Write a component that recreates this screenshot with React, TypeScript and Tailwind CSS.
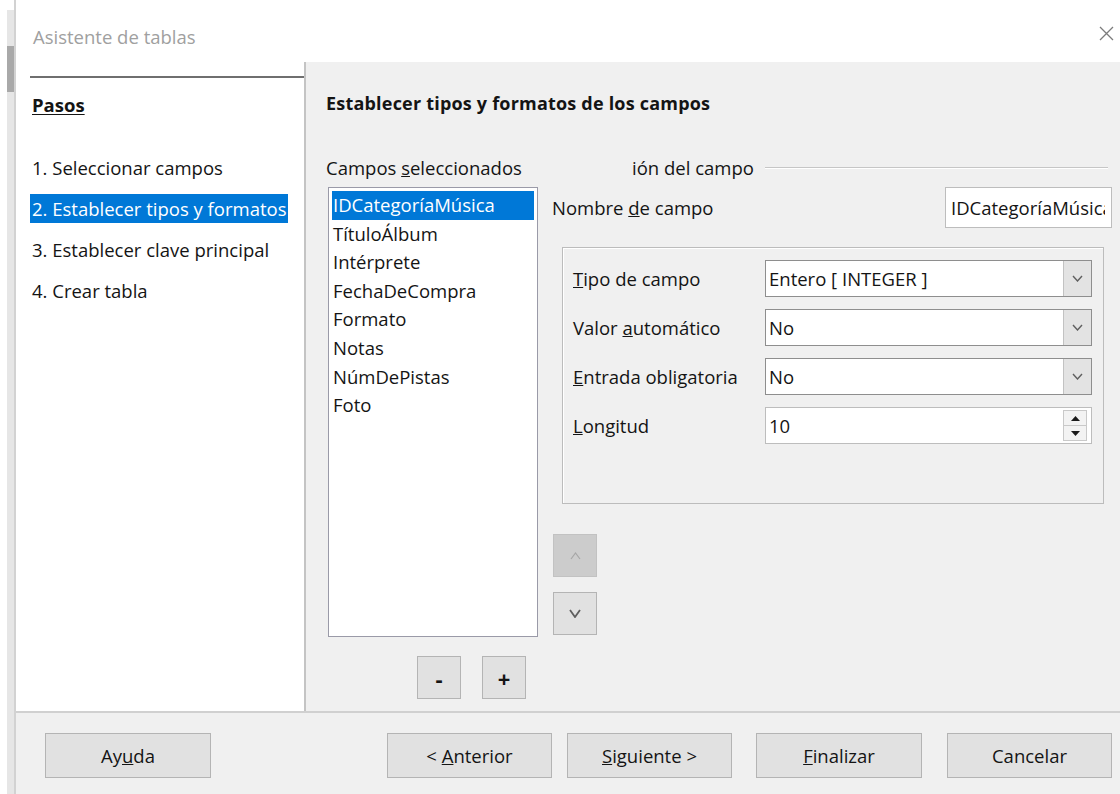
import type { ReactNode } from "react";

const fields = [
  "IDCategoríaMúsica",
  "TítuloÁlbum",
  "Intérprete",
  "FechaDeCompra",
  "Formato",
  "Notas",
  "NúmDePistas",
  "Foto",
];

const steps = [
  "1. Seleccionar campos",
  "2. Establecer tipos y formatos",
  "3. Establecer clave principal",
  "4. Crear tabla",
];

function Chevron({
  up = false,
  color = "#6b6b6b",
  w = 10,
  h = 6,
  sw = 1.3,
}: {
  up?: boolean;
  color?: string;
  w?: number;
  h?: number;
  sw?: number;
}) {
  const pts = up
    ? `1,${h - 1} ${w / 2},1 ${w - 1},${h - 1}`
    : `1,1 ${w / 2},${h - 1} ${w - 1},1`;
  return (
    <svg width={w} height={h} viewBox={`0 0 ${w} ${h}`}>
      <polyline points={pts} fill="none" stroke={color} strokeWidth={sw} />
    </svg>
  );
}

function Combo({ value }: { value: string }) {
  return (
    <div className="flex h-[37px] w-[327px] border border-[#8e8e8e] bg-white">
      <div className="flex flex-1 items-center pl-[3px] leading-[24px]">{value}</div>
      <div className="flex w-[28px] items-center justify-center border-l border-[#c2c2c2] bg-[#e3e3e3]">
        <Chevron color="#5f5f5f" w={11} h={7} sw={1.4} />
      </div>
    </div>
  );
}

function Spin({ value }: { value: string }) {
  return (
    <div className="flex h-[37px] w-[327px] border border-[#bdbdbd] bg-white">
      <div className="flex flex-1 items-center pl-[3px] leading-[24px]">{value}</div>
      <div className="my-[2px] mr-[4px] flex w-[24px] flex-col border border-[#c9c9c9] bg-[#f3f3f3]">
        <div className="flex flex-1 items-center justify-center border-b border-[#c9c9c9]">
          <svg width="9" height="5" viewBox="0 0 9 5">
            <polygon points="0,5 4.5,0 9,5" fill="#1a1a1a" />
          </svg>
        </div>
        <div className="flex flex-1 items-center justify-center">
          <svg width="9" height="5" viewBox="0 0 9 5">
            <polygon points="0,0 4.5,5 9,0" fill="#1a1a1a" />
          </svg>
        </div>
      </div>
    </div>
  );
}

function FieldRow({ label, children }: { label: ReactNode; children: ReactNode }) {
  return (
    <div className="flex h-[37px] items-center">
      <div className="w-[192px] leading-[24px]">{label}</div>
      {children}
    </div>
  );
}

function Button({ children, w }: { children: ReactNode; w: string }) {
  return (
    <div
      className={`flex h-[45px] ${w} items-center justify-center border border-[#b4b4b4] bg-[#e1e1e1] leading-[24px]`}
    >
      <span>{children}</span>
    </div>
  );
}

export default function App() {
  return (
    <div className="flex h-[794px] w-[1120px] overflow-hidden bg-white font-['Open_Sans','Liberation_Sans',sans-serif] text-[18.5px] text-[#141414]">
      {/* window edge with scrollbar */}
      <div className="flex w-[16px] shrink-0">
        <div className="w-[7px] bg-white" />
        <div className="mt-[10px] flex w-[7px] flex-col bg-[#e6e6e6] pt-[36px]">
          <div className="h-[46px] bg-[#a9a9a9]" />
        </div>
        <div className="w-[2px] bg-[#d2d2d2]" />
      </div>

      <div className="flex flex-1 flex-col">
        {/* title bar */}
        <div className="flex h-[62px] shrink-0 items-start justify-between pl-[17px] pr-[6px]">
          <span className="mt-[25px] leading-[24px] text-[#a0a0a0]">Asistente de tablas</span>
          <svg className="mt-[26px]" width="15" height="15" viewBox="0 0 15 15">
            <path d="M1 1 L14 14 M14 1 L1 14" stroke="#7c7c7c" strokeWidth="1.3" />
          </svg>
        </div>

        <div className="flex h-[649px] shrink-0">
          {/* steps */}
          <div className="w-[290px] shrink-0 border-r-2 border-[#c4c4c4] bg-white pl-[14px]">
            <div className="mt-[14px] h-[2px] bg-[#6f6f6f]" />
            <div className="mt-[15px] px-[2px] font-bold leading-[24px] underline underline-offset-2">
              Pasos
            </div>
            <div className="mt-[29.5px]">
              {steps.map((s, i) => (
                <div key={s} className="flex h-[41px] items-center">
                  <span
                    className={`px-[2px] leading-[29px] ${
                      i === 1 ? "bg-[#0078d7] text-white" : ""
                    }`}
                  >
                    {s}
                  </span>
                </div>
              ))}
            </div>
          </div>

          {/* field settings */}
          <div className="flex-1 bg-[#f0f0f0] pl-[20px] pt-[29px]">
            <div className="text-[18px] font-bold leading-[24px] tracking-[0.2px]">
              Establecer tipos y formatos de los campos
            </div>

            <div className="mt-[41px] flex">
              <div className="w-[212px] shrink-0">
                <div className="leading-[24px]">
                  Campos <u>s</u>eleccionados
                </div>
                <div className="ml-[2px] mt-[7px] h-[450px] w-[210px] border border-[#9a9aa8] bg-white p-[3px]">
                  {fields.map((f, i) => (
                    <div
                      key={f}
                      className={`h-[28.6px] px-[1px] leading-[28px] ${
                        i === 0 ? "bg-[#0078d7] text-white" : ""
                      }`}
                    >
                      {f}
                    </div>
                  ))}
                </div>
                <div className="ml-[91px] mt-[19px] flex gap-[21px]">
                  <div className="flex h-[43px] w-[44px] items-center justify-center border border-[#b4b4b4] bg-[#e1e1e1] text-[22px] font-bold leading-none">
                    -
                  </div>
                  <div className="flex h-[43px] w-[44px] items-center justify-center border border-[#b4b4b4] bg-[#e1e1e1] text-[22px] font-bold leading-none">
                    +
                  </div>
                </div>
              </div>

              <div className="ml-[14px] w-[560px] shrink-0">
                <div className="flex items-center pl-[80px] pr-[4px]">
                  <span className="leading-[24px]">ión del campo</span>
                  <div className="ml-[11px] h-[2px] flex-1 border-t border-[#c6c6c6] bg-white" />
                </div>

                <div className="mt-[7px] flex items-center justify-between">
                  <span className="leading-[24px]">
                    Nombre <u>d</u>e campo
                  </span>
                  <div className="flex h-[41px] w-[167px] items-center border border-[#bdbdbd] bg-white pl-[5px]">
                    <div className="w-[154px] overflow-hidden whitespace-nowrap">
                      IDCategoríaMúsica
                    </div>
                  </div>
                </div>

                <div className="ml-[10px] mt-[19px] flex h-[257px] w-[542px] flex-col gap-[12px] border border-[#bcbcbc] pl-[10px] pt-[12px] shadow-[inset_1px_1px_0_#ffffff]">
                  <FieldRow
                    label={
                      <>
                        <u>T</u>ipo de campo
                      </>
                    }
                  >
                    <Combo value="Entero [ INTEGER ]" />
                  </FieldRow>
                  <FieldRow
                    label={
                      <>
                        Valor <u>a</u>utomático
                      </>
                    }
                  >
                    <Combo value="No" />
                  </FieldRow>
                  <FieldRow
                    label={
                      <>
                        <u>E</u>ntrada obligatoria
                      </>
                    }
                  >
                    <Combo value="No" />
                  </FieldRow>
                  <FieldRow
                    label={
                      <>
                        <u>L</u>ongitud
                      </>
                    }
                  >
                    <Spin value="10" />
                  </FieldRow>
                </div>

                <div className="ml-[1px] mt-[30px] flex flex-col gap-[15px]">
                  <div className="flex h-[43px] w-[44px] items-center justify-center border border-[#c2c2c2] bg-[#cccccc]">
                    <Chevron up color="#a6a6a6" w={11} h={8} sw={1.2} />
                  </div>
                  <div className="flex h-[43px] w-[44px] items-center justify-center border border-[#b4b4b4] bg-[#e1e1e1]">
                    <Chevron color="#5e5e5e" w={12} h={9} sw={1.8} />
                  </div>
                </div>
              </div>
            </div>
          </div>
        </div>

        {/* footer buttons */}
        <div className="flex flex-1 border-t-2 border-[#d0d0d0] bg-[#f0f0f0] pl-[29px] pt-[20px]">
          <Button w="w-[166px]">
            Ay<u>u</u>da
          </Button>
          <div className="ml-[176px] flex">
            <Button w="w-[165px]">
              &lt; <u>A</u>nterior
            </Button>
            <div className="ml-[15px]">
              <Button w="w-[165px]">
                <u>S</u>iguiente &gt;
              </Button>
            </div>
            <div className="ml-[24px]">
              <Button w="w-[166px]">
                <u>F</u>inalizar
              </Button>
            </div>
            <div className="ml-[25px]">
              <Button w="w-[165px]">Cancelar</Button>
            </div>
          </div>
        </div>
      </div>
    </div>
  );
}
